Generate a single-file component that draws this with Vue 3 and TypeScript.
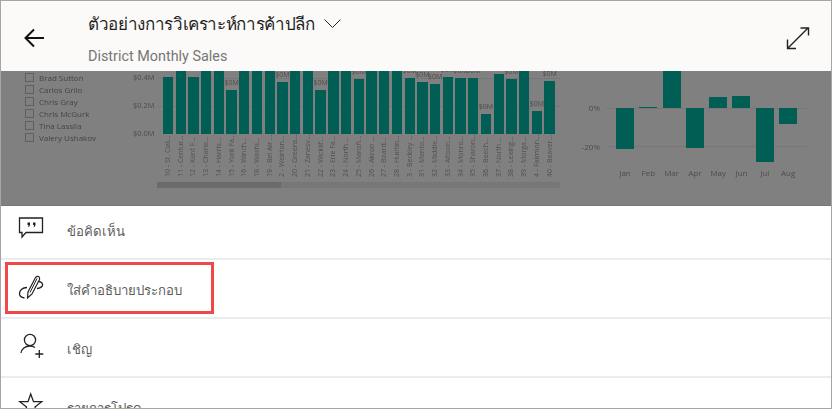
<script setup lang="ts">
interface Bar {
  name: string;
  height: number;
  label?: boolean;
}

const people = ['Brad Sutton', 'Carlos Grilo', 'Chris Gray', 'Chris McGurk', 'Tina Lassila', 'Valery Ushakov'];

const bars: Bar[] = [
  { name: '10 - St. Clai...', height: 57 },
  { name: '11 - Centur...', height: 72 },
  { name: '12 - Kent F...', height: 57 },
  { name: '13 - Charle...', height: 72 },
  { name: '14 - Harris...', height: 72 },
  { name: '15 - York Fa...', height: 44, label: true },
  { name: '16 - Winch...', height: 72 },
  { name: '18 - Washi...', height: 72 },
  { name: '19 - Bel Air ...', height: 72 },
  { name: '2 - Weirton...', height: 52, label: true },
  { name: '20 - Greens...', height: 72 },
  { name: '21 - Zanesv...', height: 72 },
  { name: '22 - Wicklif...', height: 44, label: true },
  { name: '23 - Erie Fa...', height: 72 },
  { name: '24 - North ...', height: 72 },
  { name: '25 - Mansfi...', height: 55, label: true },
  { name: '26 - Akron ...', height: 72 },
  { name: '27 - Board...', height: 72 },
  { name: '28 - Huntin...', height: 72 },
  { name: '3 - Beckley ...', height: 56, label: true },
  { name: '31 - Mento...', height: 52, label: true },
  { name: '32 - Middle...', height: 50, label: true },
  { name: '33 - Altoon...', height: 57, label: true },
  { name: '34 - Monro...', height: 56, label: true },
  { name: '35 - Sharon...', height: 56, label: true },
  { name: '36 - Beech...', height: 20, label: true },
  { name: '37 - North ...', height: 60 },
  { name: '38 - Lexing...', height: 55, label: true },
  { name: '39 - Morga...', height: 72 },
  { name: '4 - Fairmon...', height: 23, label: true },
  { name: '40 - Beaver...', height: 53, label: true },
];

// up = above the 0% line, down = below it
const months = [
  { name: 'Jan', up: 0, down: 41 },
  { name: 'Feb', up: 1, down: 0 },
  { name: 'Mar', up: 40, down: 0 },
  { name: 'Apr', up: 0, down: 40 },
  { name: 'May', up: 11, down: 0 },
  { name: 'Jun', up: 12, down: 0 },
  { name: 'Jul', up: 0, down: 54 },
  { name: 'Aug', up: 0, down: 16 },
];
</script>

<template>
  <div class="frame">
    <header class="header">
      <svg class="back" width="21" height="20" viewBox="0 0 21 20">
        <path d="M20 10H2M10 1.5L1.5 10L10 18.5" fill="none" stroke="#111" stroke-width="2" />
      </svg>
      <div class="titles">
        <div class="title-row">
          <span class="title">ตัวอย่างการวิเคราะห์การค้าปลีก</span>
          <svg width="17" height="10" viewBox="0 0 17 10">
            <path d="M0.5 0.5L8.5 8.5L16.5 0.5" fill="none" stroke="#222" stroke-width="1" />
          </svg>
        </div>
        <div class="subtitle">District Monthly Sales</div>
      </div>
      <svg class="expand" width="24" height="24" viewBox="0 0 24 24">
        <path d="M2 22L22 2M14.5 2H22.5V9.5M1.5 13.5V22.5H10" fill="none" stroke="#222" stroke-width="1.4" />
      </svg>
    </header>

    <section class="report">
      <ul class="slicer">
        <li v-for="person in people" :key="person"><i></i>{{ person }}</li>
      </ul>

      <div class="axis">
        <span>$0.4M</span>
        <span>$0.2M</span>
        <span>$0.0M</span>
      </div>

      <div class="bar-chart">
        <div class="bars">
          <div v-for="bar in bars" :key="bar.name" class="bar-col">
            <span v-if="bar.label" class="bar-label">$0M</span>
            <div class="bar" :style="{ height: bar.height + 'px' }"></div>
            <span class="bar-name">{{ bar.name }}</span>
          </div>
        </div>
        <div class="scrollbar"><div class="thumb"></div></div>
      </div>

      <div class="pct-chart">
        <div class="pct-axis">
          <span>0%</span>
          <span>-20%</span>
        </div>
        <div class="pct-plot">
          <div class="pct-bars">
            <div v-for="m in months" :key="m.name" class="pct-col">
              <div class="pct-up"><div class="pct-bar" :style="{ height: m.up + 'px' }"></div></div>
              <div class="pct-down"><div class="pct-bar" :style="{ height: m.down + 'px' }"></div></div>
              <span class="pct-name">{{ m.name }}</span>
            </div>
          </div>
        </div>
      </div>
    </section>

    <nav class="menu">
      <div class="row first">
        <svg class="icon" width="26" height="22" viewBox="0 0 26 22">
          <path d="M1.5 1H24.5V15.5H8L4 20V15.5H1.5Z" fill="none" stroke="#222" stroke-width="1.3" />
          <path d="M9.5 5.5H12V8L11 10H10.2L10.6 8H9.5ZM15 5.5H17.5V8L16.5 10H15.7L16.1 8H15Z" fill="#222" />
        </svg>
        <span>ข้อคิดเห็น</span>
      </div>
      <div class="row">
        <svg class="icon" width="26" height="26" viewBox="18 274 26 26">
          <path d="M27.5 298L28 292L35.5 277.5Q37 276 38.8 276.5Q40 278 39.5 279.5L32 294Z" fill="none" stroke="#222" stroke-width="1.2" />
          <path d="M30 292.5L37 278.5" fill="none" stroke="#222" stroke-width="1" />
          <path d="M27 287.5C22 287.5 19.5 291 19.5 293.5C19.5 296 21.5 297.5 24.5 298M39 281.5C42 282 43 284 42.5 285.5C42 287 40 288 37 288.5" fill="none" stroke="#222" stroke-width="1.3" />
        </svg>
        <span>ใส่คำอธิบายประกอบ</span>
        <div class="highlight"></div>
      </div>
      <div class="row">
        <svg class="icon" width="26" height="26" viewBox="18 334 26 26">
          <circle cx="30" cy="341" r="5.6" fill="none" stroke="#222" stroke-width="1.3" />
          <path d="M21 354C21.5 350 25 347 30 347C32 347 33.5 347.5 35 348.5" fill="none" stroke="#222" stroke-width="1.3" />
          <path d="M39.3 351V359M35.3 355H43.3" fill="none" stroke="#222" stroke-width="1.3" />
        </svg>
        <span>เชิญ</span>
      </div>
      <div class="row">
        <svg class="icon" width="26" height="26" viewBox="18 393 26 26">
          <path d="M30.7 395L33.5 402.7H41.7L35 408L37.5 416L30.7 411L24 416L26.5 408L19.8 402.7H28Z" fill="none" stroke="#222" stroke-width="1.3" />
        </svg>
        <span>รายการโปรด</span>
      </div>
    </nav>
  </div>
</template>

<style>
html,
body {
  margin: 0;
  overflow: hidden;
}
</style>

<style scoped>
.frame {
  width: 832px;
  height: 409px;
  box-sizing: border-box;
  border: 1px solid #a5a5a3;
  overflow: hidden;
  background: #fff;
  font-family: 'Noto Sans', 'Open Sans', sans-serif;
  display: flex;
  flex-direction: column;
}

.header {
  height: 70px;
  flex: none;
  background: #fbfaf8;
  display: flex;
  align-items: flex-start;
  position: relative;
  z-index: 1;
}

.back {
  margin: 27px 0 0 23px;
  flex: none;
}

.titles {
  margin: 0 0 0 43px;
  flex: 1;
}

.title-row {
  display: flex;
  align-items: center;
  gap: 9px;
  height: 44px;
  margin: 1px 0;
}

.title {
  font-size: 17px;
  letter-spacing: -0.35px;
  line-height: 44px;
  color: #1f1f1f;
}

.subtitle {
  font-family: Roboto, sans-serif;
  font-size: 14.4px;
  line-height: 20px;
  color: #767676;
}

.expand {
  margin: 25px 21px 0 0;
  flex: none;
}

.report {
  height: 134px;
  flex: none;
  background: #808080;
  overflow: hidden;
  display: flex;
  align-items: flex-start;
  color: #4c4c4c;
  font-family: 'Open Sans', sans-serif;
  font-size: 8px;
  filter: blur(0.4px);
}

.slicer {
  list-style: none;
  width: 108px;
  margin: 1px 0 0 24px;
  padding: 0;
  flex: none;
}

.slicer li {
  display: flex;
  align-items: center;
  gap: 5px;
  height: 11.9px;
  color: #444;
}

.slicer i {
  width: 7px;
  height: 7px;
  border: 1px solid #5f5f5f;
  flex: none;
}

.axis {
  width: 19px;
  flex: none;
  display: flex;
  flex-direction: column;
  gap: 17px;
  text-align: right;
  margin-top: 1px;
  font-size: 7.5px;
}

.axis span {
  line-height: 11px;
}

.bar-chart {
  width: 403px;
  margin-left: 5px;
  flex: none;
}

.bars {
  display: flex;
  gap: 2.73px;
  padding-left: 6px;
  height: 63px;
  background:
    linear-gradient(#777, #777) 0 7px / 100% 1px no-repeat,
    linear-gradient(#777, #777) 0 35px / 100% 1px no-repeat;
}

.bar-col {
  width: 10px;
  flex: none;
  height: 63px;
  display: flex;
  flex-direction: column;
  justify-content: flex-end;
  align-items: center;
  position: relative;
}

.bar-label {
  font-size: 7px;
  line-height: 14px;
  white-space: nowrap;
}

.bar {
  width: 10.3px;
  flex: none;
  background: #005e55;
}

.bar-name {
  position: absolute;
  top: 68px;
  left: 0;
  width: 10px;
  height: 38px;
  writing-mode: vertical-rl;
  transform: rotate(180deg);
  white-space: nowrap;
  font-size: 7px;
  line-height: 10px;
  color: #505050;
}

.scrollbar {
  margin-top: 48px;
  height: 6px;
  background: #777;
}

.thumb {
  width: 124px;
  height: 6px;
  background: #6b6b6b;
}

.pct-chart {
  flex: none;
  display: flex;
  margin-left: 13px;
}

.pct-axis {
  width: 27px;
  text-align: right;
  display: flex;
  flex-direction: column;
  gap: 28px;
  margin-top: 31px;
}

.pct-axis span {
  line-height: 11px;
}

.pct-plot {
  width: 201px;
  margin-left: 6px;
  background:
    linear-gradient(#777, #777) 0 37px / 100% 1px no-repeat,
    linear-gradient(#777, #777) 0 75px / 100% 1px no-repeat;
  height: 134px;
}

.pct-bars {
  display: flex;
  gap: 5.3px;
  padding-left: 10px;
}

.pct-col {
  width: 18px;
  flex: none;
  display: flex;
  flex-direction: column;
  align-items: center;
}

.pct-up {
  height: 37px;
  width: 100%;
  display: flex;
  align-items: flex-end;
}

.pct-down {
  height: 59px;
  width: 100%;
}

.pct-bar {
  width: 100%;
  background: #005e55;
}

.pct-name {
  line-height: 11px;
  white-space: nowrap;
  color: #4c4c4c;
  font-size: 8px;
}

.menu {
  flex: 1;
  background: #fff;
  border-top: 1px solid #777;
}

.row {
  height: 57px;
  border-bottom: 2px solid #ececec;
  display: flex;
  align-items: center;
  position: relative;
  font-size: 13.2px;
  color: #605e5c;
}

.row.first {
  height: 52px;
}

.row span {
  margin-top: 3px;
}

.row.first span {
  margin-top: -2px;
}

.row .icon {
  margin-left: 17px;
  margin-right: 23px;
  margin-top: -3px;
  flex: none;
}

.row.first .icon {
  margin-top: -8px;
}

.highlight {
  position: absolute;
  left: 4px;
  top: 2px;
  width: 203px;
  height: 46px;
  border: 3px solid #f04848;
}
</style>
